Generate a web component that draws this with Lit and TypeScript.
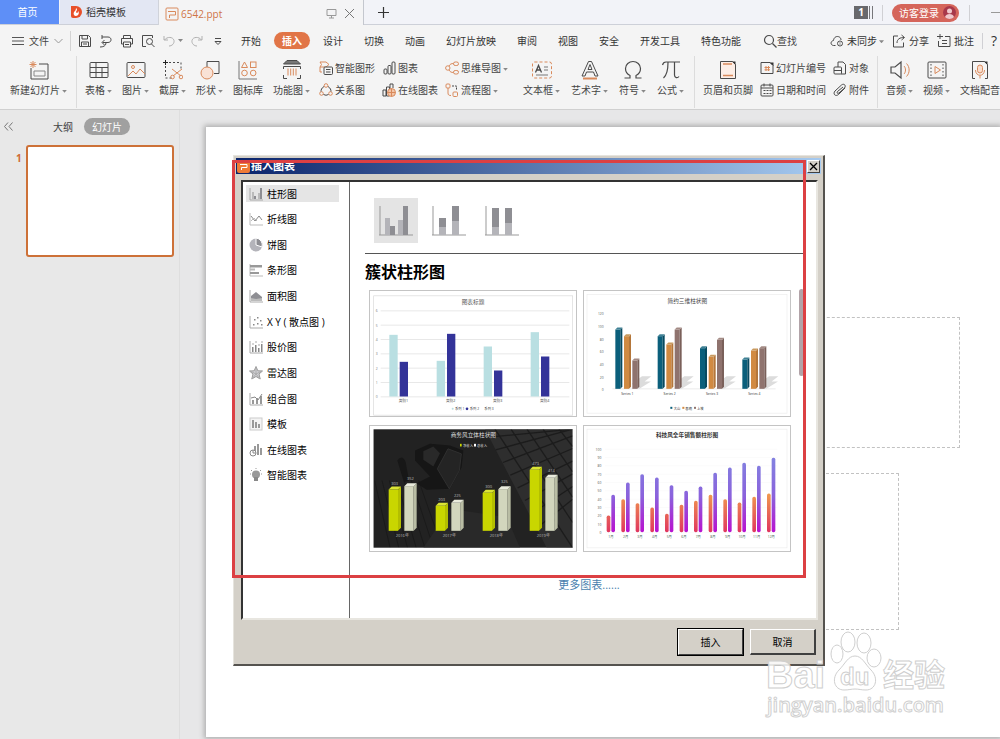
import { LitElement, html, svg, css } from "lit";
import { customElement, state } from "lit/decorators.js";

const O = "#d98a5c";
const K = "#4a4a4a";

const icons: Record<string, any> = {
  newSlide: svg`<path d="M2 8v11h17V4h-9" stroke=${K}/><path d="M5 11h11v5H5z" stroke="#888"/><path d="M4 1v7M.500 4.500h7M1.500 2l5 5M6.500 2l-5 5" stroke=${O}/>`,
  table: svg`<rect x="1" y="2.500" width="18" height="15" rx="1" stroke=${K}/><path d="M1 7.500h18M1 12.500h18M7 2.500v15M13 7.500v10" stroke=${K}/>`,
  picture: svg`<rect x="1" y="2.500" width="18" height="15" rx="1" stroke=${K}/><circle cx="7" cy="7" r="1.500" stroke=${O}/><path d="M2 16l5-5 3 3 4-5 5 5" stroke=${O}/>`,
  shot: svg`<path d="M0 2.500h5M2.500 0v5" stroke="#222"/><path d="M6 2.500h12V9M2.500 6v12h6" stroke=${K} stroke-dasharray="2 2"/><path d="M9 9l9 7M19 9l-9 7" stroke=${O}/><circle cx="9.500" cy="17" r="1.800" stroke=${O}/><circle cx="18" cy="17" r="1.800" stroke=${O}/>`,
  shapes: svg`<path d="M7 7V1.500h12v12h-5" stroke=${K}/><circle cx="7" cy="13" r="6" fill="#f9e2d6" stroke=${O}/>`,
  iconLib: svg`<path d="M1 1v18h18" stroke="#777"/><path d="M6.500 2l3 5.500h-6z" stroke=${O}/><rect x="12.500" y="2" width="5.500" height="5.500" stroke=${O}/><circle cx="6.500" cy="13" r="2.800" stroke=${O}/><circle cx="15.200" cy="13" r="2.800" stroke=${O}/>`,
  funcChart: svg`<path d="M5 .500h10l3.500 3.500h-17z" fill="#777" stroke=${K}/><path d="M1.500 9V6.500h17V9M1.500 15v3.500H5M18.500 15v3.500H15" stroke=${K}/><path d="M6 8.500v7M8.700 8.500v7M11.300 8.500v7M14 8.500v7" stroke=${O}/>`,
  textBox: svg`<rect x=".500" y="2" width="19" height="16" rx="2" stroke=${O} stroke-dasharray="3 2"/><path d="M3.500 12.500l3-7 3 7M4.500 10h4" stroke=${K} stroke-width="1.300"/><path d="M12 7h4M12 10h4M4 15h12" stroke="#777"/>`,
  wordArt: svg`<path d="M2 16L8.500 1.500h3L18 16h-3l-1.500-4h-7L5 16zM8 9.500h4L10 4.500z" stroke=${K}/><path d="M3 18.500h14" stroke=${O} stroke-width="2"/>`,
  omega: svg`<path d="M1.500 18h5.500v-2.500C4 14 2.500 11.500 2.500 8.500 2.500 4.500 6 1.500 10 1.500s7.500 3 7.500 7c0 3-1.500 5.500-4.500 7V18h5.500" stroke=${K} stroke-width="1.200"/>`,
  pi: svg`<path d="M1.500 5c.500-2 1.500-3 3.500-3h14M7 2.500c0 6-.500 12-4.500 15.500M13.500 2.500V15c0 3 3 3.500 4.500 1.500" stroke=${K} stroke-width="1.200"/>`,
  header: svg`<path d="M2.500 1.500h12l3 3v14h-15z" fill="#fdeee6" stroke=${K}/><path d="M5 4h9M5 15.500h10" stroke=${O} stroke-width="1.500"/><path d="M14 1.500l3.500 3.500V1.500z" fill="#333"/>`,
  audio: svg`<path d="M1 7v6h4l6 5V2L5 7z" stroke=${K} stroke-width="1.200"/><path d="M14 6c2 2 2 6 0 8M16.500 3.500c3.500 3.500 3.500 9.500 0 13" stroke=${O}/>`,
  video: svg`<rect x="1" y="2" width="18" height="16" rx="1" stroke=${K}/><path d="M8 6.500v7l5.500-3.500z" stroke=${O}/><path d="M4 4v12M16 4v12" stroke=${K} stroke-dasharray="1.500 2"/>`,
  dub: svg`<path d="M5 18.500H2.500v-17h12l3 3v14H15" stroke=${K}/><path d="M14 1.500l3.500 3.500V1.500z" fill="#333"/><rect x="7.500" y="5" width="5" height="8" rx="2.500" fill="#f9dccb" stroke=${O}/><path d="M5.500 10c0 7 9 7 9 0M10 15.500v3" stroke=${O}/>`,
  smart: svg`<path d="M1 1h6l3 2.500L7 6H1l1.500-2.500zM1 6v5h2" stroke=${O}/><rect x="5" y="6" width="8.500" height="7.500" rx="1" fill="#f4f4f4" stroke=${K}/><path d="M7 8.500h4.500M7 11h4.500" stroke=${K}/>`,
  relation: svg`<circle cx="7" cy="2.500" r="1.800" stroke=${O}/><circle cx="2.500" cy="10.500" r="1.800" stroke=${O}/><circle cx="11.500" cy="10.500" r="1.800" stroke=${O}/><path d="M5 3.500C2.500 5 2 7 2 8.500M9 3.500c2.500 1.500 3 3.500 3 5M4.500 11.500q2.500 1.500 5 0" stroke=${K}/>`,
  chart: svg`<rect x="2" y="8" width="3" height="5" rx="1" stroke=${K}/><rect x="6" y="4.500" width="3" height="8.500" rx="1" stroke=${K}/><rect x="10" y="1" width="3" height="12" rx="1" stroke=${K}/>`,
  onlineChart: svg`<path d="M1 7h3v6H1zM4.500 4h3v9h-3zM8 7V1h3v4" stroke=${K}/><circle cx="9.500" cy="9.500" r="4" fill="#f3c6a9" stroke=${O}/><path d="M5.500 9.500h8M9.500 5.500v8" stroke=${O}/>`,
  mind: svg`<circle cx="2.800" cy="7" r="2.200" stroke=${O}/><rect x="8.500" y="1" width="5" height="3.500" rx="1.700" stroke=${O}/><rect x="8.500" y="9.500" width="5" height="3.500" rx="1.700" stroke=${O}/><path d="M4 5C5 3 6.500 2.500 8.500 2.500M4 9c1 2 2.500 2.500 4.500 2.500" stroke=${O}/>`,
  flow: svg`<rect x="1" y="1" width="4" height="4" rx="1" stroke=${O}/><path d="M7 3h4.500v4" stroke=${K} stroke-dasharray="2 1"/><path d="M3 5v5c0 2 1 2.500 3 2.500" stroke=${O}/><rect x="8" y="9" width="4.500" height="4.500" rx="1" stroke=${O}/>`,
  slideNo: svg`<path d="M10 1.500H1v11h12v-8z" stroke=${K}/><path d="M9.500 1.500h4v3.500z" fill="#333"/><path d="M6 5v5M8.500 5v5M4.500 6.500h5.500M4.500 8.800h5.500" stroke=${O}/>`,
  date: svg`<rect x="1" y="2" width="12" height="11" rx="1" stroke=${K}/><path d="M1 5h12M4 .500v3M10 .500v3M3.500 7.500h2M6.500 7.500h2M9.500 7.500h2M3.500 10.500h2M6.500 10.500h2M9.500 10.500h2" stroke=${K}/>`,
  object: svg`<path d="M5 6V1h5l2.500 2.500V13H8" stroke=${K}/><rect x="1" y="6" width="7.500" height="7" rx="1" stroke=${K}/><path d="M1 9.500h7.500" stroke=${K}/>`,
  clip: svg`<path d="M12 5l-6.500 6.500c-3 2.500-6-.500-3.500-3.500L8.500 2c2.500-2 5 .500 3 3L6 10c-1.500 1-2.500 0-1.500-1.500L10 4" stroke=${K}/>`,
  save: svg`<path d="M1.500 1.500h9l2 2v9h-11z" stroke=${K}/><path d="M4 1.500v3.500h5.500v-3.500M3.500 12.500V8h7v4.500M5 10h4" stroke=${K}/>`,
  export: svg`<path d="M3 3h6c4 0 4 5.500 0 5.500H3.500M5.500 6L3 8.500 5.500 11M3 1v4M1 13c3 0 6-1 6-4" stroke=${K}/>`,
  print: svg`<path d="M3.500 4V1.500h7V4M3.500 10H1.500V4.500h11V10h-2" stroke=${K}/><path d="M3.500 8h7v5h-7zM5 10.500h4" stroke=${K}/>`,
  preview: svg`<path d="M5 12.500H1.500v-11h10V4" stroke=${K}/><circle cx="8.500" cy="7.500" r="3" stroke=${K}/><path d="M10.500 10l3 3" stroke=${K}/>`,
  undo: svg`<path d="M2 2v4h4M2.500 6C5 2.500 11 2.500 12 6.500c.500 3-2 5.500-5 5.500" stroke="#b0b0b0"/>`,
  redo: svg`<path d="M12 2v4H8M11.500 6C9 2.500 3 2.500 2 6.500c-.500 3 2 5.500 5 5.500" stroke="#b0b0b0"/>`,
  more: svg`<path d="M4 4.500h6M4 7.500l3 3 3-3z" stroke=${K}/>`,
  search: svg`<circle cx="6" cy="6" r="4.500" stroke=${K} stroke-width="1.200"/><path d="M9.500 9.500l4 4" stroke=${K} stroke-width="1.200"/>`,
  cloud: svg`<path d="M5.500 11.500H3.500c-3.500-.500-3-4.500 0-5C4 1 11 1.500 11 6" stroke=${K}/><circle cx="10" cy="9.500" r="2.500" stroke=${K}/><path d="M10 7v5" stroke="#999"/>`,
  share: svg`<path d="M6 2H1.500v11h10V8.500M5 9c0-4 3-5.500 7-5.500M9.500 1l3 2.500-3 2.500" stroke=${K}/>`,
  comment: svg`<path d="M8 2.500h5v10H1.500V7M0 2.500h6M3 0v5M5 6.500h5M5 9.500h5" stroke=${K}/>`,
};

const kinds: Record<string, any> = {
  bar: svg`<path d="M1 1v12h13" stroke="#aaa"/><path d="M3 5h2v7H3zM9 6h2v6H9z" fill="#bbb"/><path d="M5 9h2v3H5zM11 1h2v11h-2z" fill="#8e8e93"/>`,
  line: svg`<path d="M1 1v12h13" stroke="#bbb"/><path d="M2 4l4 5 4-5 3 4" stroke="#888"/><path d="M2 9l3-3 3 3" stroke="#bbb"/>`,
  pie: svg`<circle cx="7" cy="7" r="6.500" fill="#b4b4ba"/><path d="M7 7V0a7 7 0 0 1 6 9z" fill="#8e8e93" stroke="#fff"/>`,
  hbar: svg`<path d="M1 1v12h13" stroke="#bbb"/><path d="M1 2h12v2.500H1z" fill="#999"/><path d="M1 5.500h5v2H1z" fill="#bbb"/><path d="M1 9h9v2H1z" fill="#999"/>`,
  area: svg`<path d="M1 1v12h13" stroke="#aaa"/><path d="M2 7l5-4 6 5v2L2 12z" fill="#8e8e93"/><path d="M2 9l5 1 6-1v3H2z" fill="#bbb"/>`,
  scatter: svg`<path d="M1 1v12h13" stroke="#aaa"/><path d="M4 9h1.500v1.500H4zM5 4h1.500v1.500H5zM8 2h1.500v1.500H8zM8 8h1.500v1.500H8zM11 5h1.500v1.500H11zM12 9h1.500v1.500H12z" fill="#888"/>`,
  stock: svg`<path d="M1 1v12h13" stroke="#aaa"/><path d="M3 7h1.500v5H3zM6 5h1.500v7H6zM9 8h1.500v4H9zM12 4h1.500v8H12z" fill="#888"/><path d="M4 3v2M7 1v2M10 4v2M13 1v2" stroke="#aaa"/>`,
  radar: svg`<path d="M7 .500l1.800 4.300 4.700.200-3.500 3 1.200 5L7 10.500 2.800 13 4 8 .500 5l4.700-.200z" fill="#d0d0d4" stroke="#999"/><path d="M7 1v7M13 5L7 8l4 5M1 5l6 3-4 5" stroke="#aaa"/>`,
  combo: svg`<path d="M1 1v12h13" stroke="#aaa"/><path d="M3 8h2v4H3zM7 6h2v6H7zM11 4h2v8h-2z" fill="#999"/><path d="M2 6l4-1 3 3 4-6" stroke="#888"/>`,
  template: svg`<rect x="1" y="1" width="12" height="12" stroke="#ccc" fill="#f4f4f4"/><path d="M3 3h2v8H3zM6 5h2v6H6zM9 7h2v4H9z" fill="#999"/>`,
  online: svg`<path d="M5 3h2v6H5zM8 1h2v11H8zM11 5h2v7h-2z" fill="#999"/><circle cx="4" cy="10" r="3" fill="#fff" stroke="#888"/><path d="M4 7v3h3" stroke="#888"/>`,
  smart: svg`<circle cx="7" cy="6.500" r="4" fill="#999"/><path d="M5 9h4v4H5z" fill="#888"/><path d="M7 0v1M1 6h1M12 6h1M2 2l1 1M12 2l-1 1" stroke="#999"/>`,
};

const big = (n: string) => html`<svg class="ic20" viewBox="0 0 20 20" fill="none" aria-hidden="true">${icons[n]}</svg>`;
const small = (n: string) => html`<svg class="ic14" viewBox="0 0 14 14" fill="none" aria-hidden="true">${icons[n]}</svg>`;
const caret = html`<i class="caret"></i>`;

const columns = [
  { x: 88, a: 163, b: 244 },
  { x: 230, a: 241, b: 160 },
  { x: 371, a: 198, b: 270 },
  { x: 512, a: 155, b: 228 },
];

const clusteredChart = () => svg`
  <rect x="41" y="46" width="597" height="358" fill="#fff" stroke="#d8d8d8" stroke-width="2"/>
  ${[6, 5, 4, 3, 2, 1, 0].map((v, i) => svg`
    <path d="M62 ${91 + i * 43}H628" stroke="#dcdcdc" stroke-width="2"/>
    <text x="50" y=${95 + i * 43} font-size="10" text-anchor="middle" fill="#777">${v}</text>`)}
  ${columns.map((c, i) => svg`
    <rect x=${c.x} y=${c.a} width="25" height=${348 - c.a} fill="#b9dfe2"/>
    <rect x=${c.x + 31} y=${c.b} width="25" height=${348 - c.b} fill="#333399"/>
    <text x=${c.x + 42} y="364" font-size="11" text-anchor="middle" fill="#444">类别${i + 1}</text>`)}
  <text x="339" y="70" font-size="17" text-anchor="middle" fill="#555">图表标题</text>
  <circle cx="278" cy="385" r="3" fill="#b9dfe2"/><text x="285" y="389" font-size="10" fill="#444">系列 1</text>
  <circle cx="321" cy="385" r="4" fill="#333399"/><text x="329" y="389" font-size="10" fill="#444">系列 2</text>
  <text x="373" y="389" font-size="10" fill="#444">系列 3</text>`;

const prism = (x: number, top: number, base: number, w: number, d: number, c: string[]) => svg`
  <path d="M${x} ${top}h${w}V${base}h${-w}z" fill=${c[0]}/>
  <path d="M${x + w} ${top}l${d} ${-d}V${base - d}l${-d} ${d}z" fill=${c[1]}/>
  <path d="M${x} ${top}l${d} ${-d}h${w}l${-d} ${d}z" fill=${c[2]}/>`;

const simple3d = () => svg`
  <rect x="34" y="42" width="600" height="356" fill="#fff" stroke="#ececec" stroke-width="2"/>
  <text x="335" y="66" font-size="17" text-anchor="middle" fill="#444">简约三维柱状图</text>
  ${[120, 100, 80, 60, 40, 20, 0].map((v, i) => svg`<text x="84" y=${104 + i * 38} font-size="10" text-anchor="end" fill="#555">${v}</text>`)}
  <path d="M110 325H600" stroke="#e2e2e2" stroke-width="2"/>
  ${[[147, 167, 240], [167, 192, 147], [203, 229, 178], [237, 210, 203]].map((g, i) => {
    const x = 119 + i * 127;
    return svg`
      <path d="M${x + 60} 325l48-38h-28l-30 22zM${x + 72} 325l35-22h-26l-30 18z" fill="#dcdcdc"/>
      ${prism(x, g[0], 325, 15, 6, ["#0b5f7b", "#084a60", "#3f8195"])}
      ${prism(x + 26, g[1], 325, 15, 6, ["#d18a42", "#b4763a", "#c99a5e"])}
      ${prism(x + 51, g[2], 325, 15, 6, ["#8f736e", "#7a605a", "#a38a84"])}
      <text x=${x + 36} y="342" font-size="10" text-anchor="middle" fill="#333">Series ${i + 1}</text>`;
  })}
  <rect x="284" y="379" width="6" height="6" fill="#0b5f7b"/><text x="294" y="387" font-size="10" fill="#333">大山</text>
  <rect x="320" y="379" width="6" height="6" fill="#d18a42"/><text x="329" y="387" font-size="10" fill="#333">春晓</text>
  <rect x="355" y="379" width="6" height="6" fill="#8f736e"/><text x="364" y="387" font-size="10" fill="#333">上坡</text>`;

const business3d = () => svg`
  <rect x="40" y="26" width="598" height="356" fill="#222"/>
  <path d="M375 26H638V382H560z" fill="#2e2e2e"/>
  ${[0, 1, 2, 3, 4, 5, 6, 7].map((i) => svg`<path d="M${385 + i * 22} ${50 + i * 38}L638 ${Math.max(26, i * 38 - 30)}" stroke="#1c1c1c" stroke-width="4"/>`)}
  ${[0, 1, 2, 3, 4].map((i) => svg`<path d="M${405 + i * 48} 26L638 ${382 - i * 76}" stroke="#1c1c1c" stroke-width="4"/>`)}
  ${[0, 1, 2, 3, 4, 5, 6].map((i) => svg`<path d="M${44 + i * 22} 180L${90 + i * 26} 380" stroke="#1a1a1a" stroke-width="3"/>`)}
  <path d="M165 90l45-20 60 5 40 15-5 50-35 65-70 3-30-20 40-20-45-48z" fill="#161616"/>
  <path d="M190 92l30-14 20 20-20 40-30-20z" fill="#292929"/>
  <path d="M232 145l32-60 40 15-6 50-30 55z" fill="#242424" stroke="#2f2f2f" stroke-width="3"/>
  <path d="M112 120q15-20 25 5l10 55-15 5z" fill="#171717"/>
  <path d="M270 265L440 290 480 382H190z" fill="#292929"/>
  <rect x="34" y="20" width="610" height="368" fill="none" stroke="#fff" stroke-width="12"/>
  <text x="340" y="50" font-size="17" text-anchor="middle" fill="#ddd">商务风立体柱状图</text>
  <rect x="300" y="70" width="5" height="8" fill="#c9d600"/><text x="309" y="78" font-size="10" fill="#ddd">净收入</text>
  <rect x="342" y="70" width="6" height="8" fill="#fff"/><text x="351" y="78" font-size="10" fill="#ddd">总收入</text>
  ${[[207, 197, 303, 352], [256, 247, 203, 225], [217, 206, 300, 325], [148, 172, 473, 414]].map((g, i) => {
    const x = 86 + i * 141;
    return svg`
      ${prism(x, g[0], 331, 28, 9, ["#c9d600", "#b3be00", "#dbe534"])}
      ${prism(x + 47, g[1], 331, 28, 9, ["#d2d6bd", "#b9bda4", "#e9ebdc"])}
      <text x=${x + 18} y=${g[0] - 15} font-size="12" text-anchor="middle" fill="#bbb">${g[2]}</text>
      <text x=${x + 65} y=${g[1] - 18} font-size="12" text-anchor="middle" fill="#bbb">${g[3]}</text>
      <text x=${x + 41} y="349" font-size="12" text-anchor="middle" fill="#bbb">${2016 + i}年</text>`;
  })}`;

const techBars = [
  [285, 223], [236, 186], [248, 161], [261, 171], [280, 194], [253, 211],
  [241, 198], [223, 157], [236, 141], [246, 127], [229, 136], [219, 112],
];
const techChart = () => svg`
  <defs>
    <linearGradient id="warm" gradientUnits="userSpaceOnUse" x1="0" y1="220" x2="0" y2="335"><stop offset="0" stop-color="#f09a4e"/><stop offset="1" stop-color="#e0355f"/></linearGradient>
    <linearGradient id="cool" gradientUnits="userSpaceOnUse" x1="0" y1="120" x2="0" y2="335"><stop offset="0" stop-color="#8380e0"/><stop offset=".500" stop-color="#8a62dc"/><stop offset="1" stop-color="#b911cf"/></linearGradient>
  </defs>
  <rect x="34" y="26" width="600" height="356" fill="#fff" stroke="#ececec" stroke-width="2"/>
  <text x="334" y="50" font-size="17" font-weight="700" text-anchor="middle" fill="#333">科技风全年销售额柱形图</text>
  ${[100, 90, 80, 70, 60, 50, 40, 30, 20, 10, 0].map((v, i) => svg`
    <path d="M88 ${86 + i * 25}H605" stroke="#f3f3f3" stroke-width="1"/>
    <text x="77" y=${90 + i * 25} font-size="10" text-anchor="end" fill="#555">${v}</text>`)}
  ${techBars.map((b, i) => {
    const x = 93 + Math.round(i * 43.7);
    return svg`
      <rect x=${x} y=${b[0]} width="11" height=${335 - b[0]} rx="5" fill="url(#warm)"/>
      <rect x=${x + 14} y=${b[1]} width="11" height=${335 - b[1]} rx="5" fill="url(#cool)"/>
      <text x=${x + 13} y="352" font-size="10" text-anchor="middle" fill="#3c5a4c">${i + 1}月</text>`;
  })}`;

const gallery = [
  { name: "图表标题", box: "30 33 618 372", draw: clusteredChart },
  { name: "简约三维柱状图", box: "25 33 618 372", draw: simple3d },
  { name: "商务风立体柱状图", box: "30 18 618 372", draw: business3d },
  { name: "科技风全年销售额柱形图", box: "25 18 618 372", draw: techChart },
];

const categories = [
  ["bar", "柱形图"], ["line", "折线图"], ["pie", "饼图"], ["hbar", "条形图"],
  ["area", "面积图"], ["scatter", "X Y ( 散点图 )"], ["stock", "股价图"], ["radar", "雷达图"],
  ["combo", "组合图"], ["template", "模板"], ["online", "在线图表"], ["smart", "智能图表"],
];

const subtypes = [
  svg`<path d="M6 6v29M5 35h34" stroke="#999"/><path d="M11 18h5v17h-5zM24 20h5v15h-5z" fill="#b4b4b9"/><path d="M16 26h5v9h-5zM29 6h5v29h-5z" fill="#8e8e93"/>`,
  svg`<path d="M6 6v29M5 35h34" stroke="#999"/><path d="M12 27h7v8h-7zM25 21h7v14h-7z" fill="#b4b4b9"/><path d="M12 18h7v9h-7zM25 6h7v15h-7z" fill="#8e8e93"/>`,
  svg`<path d="M6 6v29M5 35h34" stroke="#999"/><path d="M12 27h7v8h-7zM25 23h7v12h-7z" fill="#b4b4b9"/><path d="M12 8h7v19h-7zM25 8h7v15h-7z" fill="#8e8e93"/>`,
];

const menuTabs = ["开始", "插入", "设计", "切换", "动画", "幻灯片放映", "审阅", "视图", "安全", "开发工具", "特色功能"];

@customElement("app-root")
export class AppRoot extends LitElement {
  @state() private menu = 1;
  @state() private category = 0;
  @state() private subtype = 0;

  static styles = css`
    :host {
      display: flex;
      flex-direction: column;
      position: relative;
      height: 100vh;
      overflow: hidden;
      background: #e8e8e8;
      color: #444;
      font: 10px/14px "Open Sans", "Noto Sans CJK SC", sans-serif;
    }
    * { box-sizing: border-box; }
    button {
      font: inherit;
      color: inherit;
      background: none;
      border: 0;
      padding: 0;
      margin: 0;
      white-space: nowrap;
      flex: none;
    }
    svg { display: block; flex: none; }
    .ic20 { width: 20px; height: 20px; }
    .ic14 { width: 14px; height: 14px; }
    .caret {
      display: inline-block;
      flex: none;
      width: 5px;
      height: 3px;
      margin-left: 2px;
      vertical-align: middle;
      background: #888;
      clip-path: polygon(0 0, 100% 0, 50% 100%);
    }

    .tabbar {
      display: flex;
      flex: none;
      height: 25px;
      background: #f2f3f8;
      border-bottom: 1px solid #cdd0d8;
      white-space: nowrap;
    }
    .tab { display: flex; align-items: center; height: 24px; }
    .home { width: 59px; justify-content: center; padding-right: 4px; background: #5e8ff7; color: #fff; }
    .store { width: 98px; padding-left: 11px; gap: 4px; margin-left: 1px; background: #e3e7f3; color: #333; }
    .doc {
      width: 206px;
      height: 25px;
      padding: 2px 8px 0 6px;
      gap: 2px;
      background: #f4f4f5;
      color: #cf7448;
      border-left: 1px solid #d0d3da;
      border-right: 1px solid #c4c7ce;
    }
    .doc .screen { margin-left: auto; }
    .doc .shut { margin-left: 5px; }
    .plus { margin-left: 14px; }
    .account { display: flex; align-items: center; margin-left: auto; height: 25px; }
    .count {
      width: 14px;
      height: 13px;
      line-height: 13px;
      background: #68686c;
      color: #fff;
      font-weight: 700;
      text-align: center;
    }
    .bars { width: 4px; height: 13px; border: solid #77777b; border-width: 0 1px; margin: 0 9px 0 1px; }
    .rule { width: 1px; height: 16px; background: #d0d0d4; }
    .login {
      display: flex;
      align-items: center;
      gap: 4px;
      height: 18px;
      margin: 0 10px 0 9px;
      padding: 0 3px 0 7px;
      border-radius: 9px;
      background: #d5655b;
      color: #fff;
    }
    .minimise { width: 9px; height: 1px; margin-left: 21px; background: #999; }

    .menubar {
      display: flex;
      flex: none;
      align-items: center;
      height: 31px;
      padding-left: 12px;
      background: #f4f4f4;
      white-space: nowrap;
    }
    .file { display: flex; align-items: center; gap: 5px; height: 20px; padding-right: 7px; border-right: 1px solid #d4d4d4; }
    .quick { display: flex; align-items: center; gap: 7px; margin-left: 7px; }
    .undo { display: flex; align-items: center; }
    .tabs { display: flex; gap: 5px; margin-left: 8px; }
    .tabs button { height: 17px; padding: 0 8px; border-radius: 9px; color: #333; }
    .tabs .on { background: #e17547; color: #fff; font-weight: 700; }
    .find { display: flex; align-items: center; margin-left: 14px; }
    .tools { display: flex; align-items: center; gap: 8px; margin-left: auto; }
    .tools button { display: flex; align-items: center; gap: 3px; color: #333; }
    .help { width: 9px; font-size: 14px; }

    .ribbon {
      display: flex;
      flex: none;
      height: 54px;
      background: #f4f4f4;
      border-bottom: 1px solid #d0d0d0;
      white-space: nowrap;
    }
    .group { display: flex; flex: none; gap: 10px; padding: 4px 0 0 8px; height: 52px; }
    .group.first { padding: 4px 9px 0 10px; }
    .group.ruled { border-right: 1px solid #dcdcdc; }
    .group.stacks { gap: 7px; padding-left: 9px; }
    .group.words { gap: 11px; padding: 4px 10px 0 15px; }
    .group.insert { gap: 7px; padding-right: 8px; }
    .cmd { display: flex; flex-direction: column; align-items: center; gap: 3px; }
    .stack { display: flex; flex-direction: column; gap: 6px; }
    .stack button { display: flex; align-items: center; gap: 2px; height: 16px; }

    .work { display: flex; flex: 1; min-height: 0; }
    .side { flex: none; width: 180px; border-right: 1px solid #dedede; }
    .sidehead { display: flex; align-items: center; padding: 8px 0 0 4px; }
    .sidehead .outline { margin-left: 40px; }
    .sidehead .slides { height: 17px; padding: 0 8px; margin-left: 11px; border-radius: 9px; background: #a0a0a0; color: #fff; }
    .fold { width: 9px; }
    .thumb { display: flex; gap: 4px; margin-top: 10px; padding: 0 5px 0 16px; }
    .thumb b { width: 6px; margin-top: 6px; color: #cf6a35; }
    .thumb div { flex: 1; height: 112px; background: #fff; border: 2px solid #cd7138; border-radius: 3px; }
    .stage { flex: 1; min-width: 0; padding: 17px 0 2px 26px; background: #e7e7e8; }
    .slide { position: relative; height: 100%; background: #fff; box-shadow: 0 0 5px 2px #b0b0b0; }
    .holder { position: absolute; border: 1px dashed #c2c2c2; }
    .holder.title { left: 60px; right: 40px; top: 190px; height: 131px; }
    .holder.sub { left: 120px; right: 101px; top: 346px; height: 157px; }

    .dialog {
      position: absolute;
      left: 233px;
      top: 155px;
      width: 592px;
      padding: 2px;
      background: #d4d0c8;
      border: solid;
      border-width: 1px 2px 2px 1px;
      border-color: #e6e4de #55534f #55534f #e6e4de;
      color: #000;
    }
    .caption {
      display: flex;
      align-items: center;
      height: 16px;
      padding: 0 1px;
      background: linear-gradient(90deg, #0a246a, #a6caf0);
      color: #fff;
      font-size: 11px;
      font-weight: 700;
      line-height: 16px;
    }
    .caption h2 { margin: 0 0 0 1px; font: inherit; }
    .close {
      width: 13px;
      height: 13px;
      margin-left: auto;
      background: #d4d0c8;
      border: 1px solid;
      border-color: #fff #404040 #404040 #fff;
    }
    .panel {
      display: flex;
      height: 440px;
      margin: 6px 3px 0 5px;
      background: #fff;
      border: 2px solid;
      border-color: #333 #e8e6e0 #e8e6e0 #333;
    }
    .kinds {
      display: flex;
      flex: none;
      flex-direction: column;
      justify-content: space-between;
      width: 107px;
      padding: 3px 10px 134px 3px;
      border-right: 1px solid #666;
    }
    .kinds button { display: flex; align-items: center; gap: 4px; height: 17px; padding-left: 3px; }
    .kinds .on { background: #e5e5e5; }
    .pane { position: relative; flex: 1; padding: 16px 12px 0 15px; }
    .types { display: flex; gap: 9px; margin: 0 0 10px 9px; }
    .types button { width: 44px; height: 45px; padding-top: 1px; }
    .types .on { background: #e4e4e4; }
    .pane h3 {
      margin: 0;
      padding-top: 6px;
      border-top: 1px solid #555;
      font-size: 16px;
      line-height: 25px;
    }
    .cards { display: grid; grid-template-columns: 1fr 1fr; gap: 8px 6px; margin: 5px 13px 0 4px; }
    .cards button { border: 1px solid #c4c4c4; background: #fff; }
    .cards svg { width: 100%; height: 125px; }
    .scroll { position: absolute; right: 12px; top: 107px; width: 5px; height: 87px; border-radius: 3px; background: #b2a3a8; }
    .link { display: block; margin: 26px 0 0 9px; color: #4a7fae; font-size: 11px; text-align: center; text-decoration: none; }
    .buttons { display: flex; justify-content: flex-end; align-items: center; gap: 6px; padding: 8px 5px 6px 0; }
    .buttons button {
      width: 66px;
      height: 26px;
      background: #d4d0c8;
      border: solid;
      border-width: 1px 2px 2px 1px;
      border-color: #fff #404040 #404040 #fff;
    }
    .buttons .default { width: 67px; height: 28px; outline: 1px solid #000; outline-offset: -1px; border-width: 2px; }

    .frame { position: absolute; left: 232px; top: 160px; width: 574px; height: 418px; border: 3px solid #dc4043; pointer-events: none; }
    .mark { position: absolute; left: 762px; bottom: 12px; width: 190px; height: 100px; pointer-events: none; }
    .mark text { font-family: "Liberation Sans", "Noto Sans CJK SC", sans-serif; font-weight: 700; }
    .mark .site { font-family: "Open Sans", sans-serif; font-weight: 600; }
  `;

  private cmd(icon: string, label: string, drop = true) {
    return html`<button class="cmd">${big(icon)}<span>${label}${drop ? caret : ""}</span></button>`;
  }

  private stack(rows: [string, string][], drop = false) {
    return html`<div class="stack">
      ${rows.map(([i, t]) => html`<button>${small(i)}<span>${t}${drop ? caret : ""}</span></button>`)}
    </div>`;
  }

  private tabbar() {
    return html`<header class="tabbar">
      <button class="tab home">首页</button>
      <button class="tab store">
        <svg width="11" height="12" viewBox="0 0 11 12"><path d="M0 0h5a6 6 0 0 1 0 12H2a2 2 0 0 1-2-2z" fill="#e8502a"/><path d="M5 2c3 2-2 4 1 5 1 0 1-2 1-2 2 2 0 5-2 5s-3-2-2-4c1-1 2-2 2-4z" fill="#fff"/></svg>
        稻壳模板
      </button>
      <div class="tab doc">
        <svg width="14" height="14" viewBox="0 0 14 14" fill="none" stroke="#d98a5c"><rect x="1" y="1" width="12" height="12" rx="1"/><path d="M3 4.500h7.500v3.500H4.500v3"/></svg>
        6542.ppt
        <svg class="screen" width="11" height="11" viewBox="0 0 11 11" fill="none" stroke="#999"><path d="M1 1.500h9v6H1zM5.500 7.500v2.500M3 10h5"/></svg>
        <button class="shut" aria-label="关闭标签"><svg width="11" height="11" viewBox="0 0 11 11" stroke="#777"><path d="M1 1l9 9M10 1l-9 9"/></svg></button>
      </div>
      <button class="plus" aria-label="新建标签"><svg width="11" height="11" viewBox="0 0 11 11" stroke="#333" stroke-width="1.200"><path d="M5.500 0v11M0 5.500h11"/></svg></button>
      <div class="account">
        <span class="count">1</span><i class="bars"></i>
        <i class="rule"></i>
        <button class="login">访客登录
          <svg width="13" height="13" viewBox="0 0 13 13"><circle cx="6.500" cy="6.500" r="6.500" fill="#a8384a"/><circle cx="6.500" cy="5" r="2.500" fill="#f0c8cc"/><path d="M2 11c1-4 8-4 9 0-2 2.500-7 2.500-9 0z" fill="#f0c8cc"/></svg>
        </button>
        <i class="rule"></i><i class="minimise"></i>
      </div>
    </header>`;
  }

  private menubar() {
    return html`<nav class="menubar">
      <button class="file">
        <svg width="12" height="10" viewBox="0 0 12 10" stroke="#555"><path d="M0 1.500h12M0 5h12M0 8.500h12"/></svg>
        文件
        <svg width="9" height="6" viewBox="0 0 9 6" fill="none" stroke="#999"><path d="M.500 1l4 4 4-4"/></svg>
      </button>
      <div class="quick">
        ${[["save", "保存"], ["export", "输出"], ["print", "打印"], ["preview", "预览"]].map(([i, t]) => html`<button aria-label=${t}>${small(i)}</button>`)}
        <button class="undo" aria-label="撤销">${small("undo")}${caret}</button>
        <button aria-label="恢复">${small("redo")}</button>
        <button aria-label="更多">${small("more")}</button>
      </div>
      <div class="tabs">
        ${menuTabs.map((t, i) => html`<button class=${i === this.menu ? "on" : ""} @click=${() => (this.menu = i)}>${t}</button>`)}
      </div>
      <button class="find">${small("search")}查找</button>
      <div class="tools">
        <button>${small("cloud")}<span>未同步${caret}</span></button>
        <button>${small("share")}<span>分享</span></button>
        <button>${small("comment")}<span>批注</span></button>
        <i class="rule"></i>
        <button class="help">?</button>
      </div>
    </nav>`;
  }

  private ribbon() {
    return html`<div class="ribbon">
      <div class="group first ruled">${this.cmd("newSlide", "新建幻灯片")}</div>
      <div class="group">
        ${this.cmd("table", "表格")}${this.cmd("picture", "图片")}${this.cmd("shot", "截屏")}
        ${this.cmd("shapes", "形状")}${this.cmd("iconLib", "图标库", false)}${this.cmd("funcChart", "功能图")}
      </div>
      <div class="group stacks">
        ${this.stack([["smart", "智能图形"], ["relation", "关系图"]])}
        ${this.stack([["chart", "图表"], ["onlineChart", "在线图表"]])}
        ${this.stack([["mind", "思维导图"], ["flow", "流程图"]], true)}
      </div>
      <div class="group words ruled">
        ${this.cmd("textBox", "文本框")}${this.cmd("wordArt", "艺术字")}${this.cmd("omega", "符号")}${this.cmd("pi", "公式")}
      </div>
      <div class="group insert ruled">
        ${this.cmd("header", "页眉和页脚", false)}
        ${this.stack([["slideNo", "幻灯片编号"], ["date", "日期和时间"]])}
        ${this.stack([["object", "对象"], ["clip", "附件"]])}
      </div>
      <div class="group">
        ${this.cmd("audio", "音频")}${this.cmd("video", "视频")}${this.cmd("dub", "文档配音", false)}
      </div>
    </div>`;
  }

  private dialog() {
    return html`<section class="dialog" role="dialog" aria-label="插入图表">
      <div class="caption">
        <svg width="13" height="13" viewBox="0 0 13 13"><rect width="13" height="13" rx="2" fill="#ee7a35"/><path d="M3 4.500h7v3H4.500V10" fill="none" stroke="#fff"/></svg>
        <h2>插入图表</h2>
        <button class="close" aria-label="关闭"><svg width="11" height="11" viewBox="0 0 11 11" stroke="#000" stroke-width="1.300"><path d="M2 2l7 7M9 2l-7 7"/></svg></button>
      </div>
      <div class="panel">
        <div class="kinds">
          ${categories.map(([k, t], i) => html`<button class=${i === this.category ? "on" : ""} @click=${() => (this.category = i)}>
            <svg class="ic14" viewBox="0 0 14 14" fill="none">${kinds[k]}</svg>${t}</button>`)}
        </div>
        <div class="pane">
          <div class="types">
            ${subtypes.map((s, i) => html`<button class=${i === this.subtype ? "on" : ""} aria-label="子类型" @click=${() => (this.subtype = i)}>
              <svg width="44" height="42" viewBox="0 0 44 42" fill="none">${s}</svg></button>`)}
          </div>
          <h3>簇状柱形图</h3>
          <div class="cards">
            ${gallery.map((g) => html`<button aria-label=${g.name}><svg viewBox=${g.box}>${g.draw()}</svg></button>`)}
          </div>
          <i class="scroll"></i>
          <a class="link" href="#more">更多图表......</a>
        </div>
      </div>
      <div class="buttons">
        <button class="default">插入</button>
        <button>取消</button>
      </div>
    </section>`;
  }

  render() {
    return html`
      ${this.tabbar()} ${this.menubar()} ${this.ribbon()}
      <main class="work">
        <aside class="side">
          <div class="sidehead">
            <button class="fold" aria-label="收起"><svg width="9" height="9" viewBox="0 0 9 9" fill="none" stroke="#777"><path d="M4 .500l-3.500 4 3.500 4M8.500 .500L5 4.500l3.500 4"/></svg></button>
            <button class="outline">大纲</button>
            <button class="slides">幻灯片</button>
          </div>
          <div class="thumb"><b>1</b><div></div></div>
        </aside>
        <div class="stage">
          <div class="slide"><div class="holder title"></div><div class="holder sub"></div></div>
        </div>
      </main>
      ${this.dialog()}
      <div class="frame"></div>
      <svg class="mark" viewBox="0 0 190 100" fill="#fff" fill-opacity=".850" stroke="#cfcfcf">
        <ellipse cx="75" cy="27" rx="6" ry="9"/><ellipse cx="86" cy="15" rx="7" ry="10"/>
        <ellipse cx="102" cy="16" rx="7" ry="10"/><ellipse cx="112" cy="31" rx="7" ry="9"/>
        <path d="M93 29c7 0 10 8 16 14 8 8 5 20-5 20-5 0-7-1-11-1s-6 1-11 1c-10 0-13-12-5-20 6-6 9-14 16-14z"/>
        <text x="4" y="61" font-size="38">Bai</text>
        <text x="78" y="58" font-size="24">du</text>
        <text x="121" y="59" font-size="31">经验</text>
        <text class="site" x="5" y="85" font-size="20">jingyan.baidu.com</text>
      </svg>
    `;
  }
}
